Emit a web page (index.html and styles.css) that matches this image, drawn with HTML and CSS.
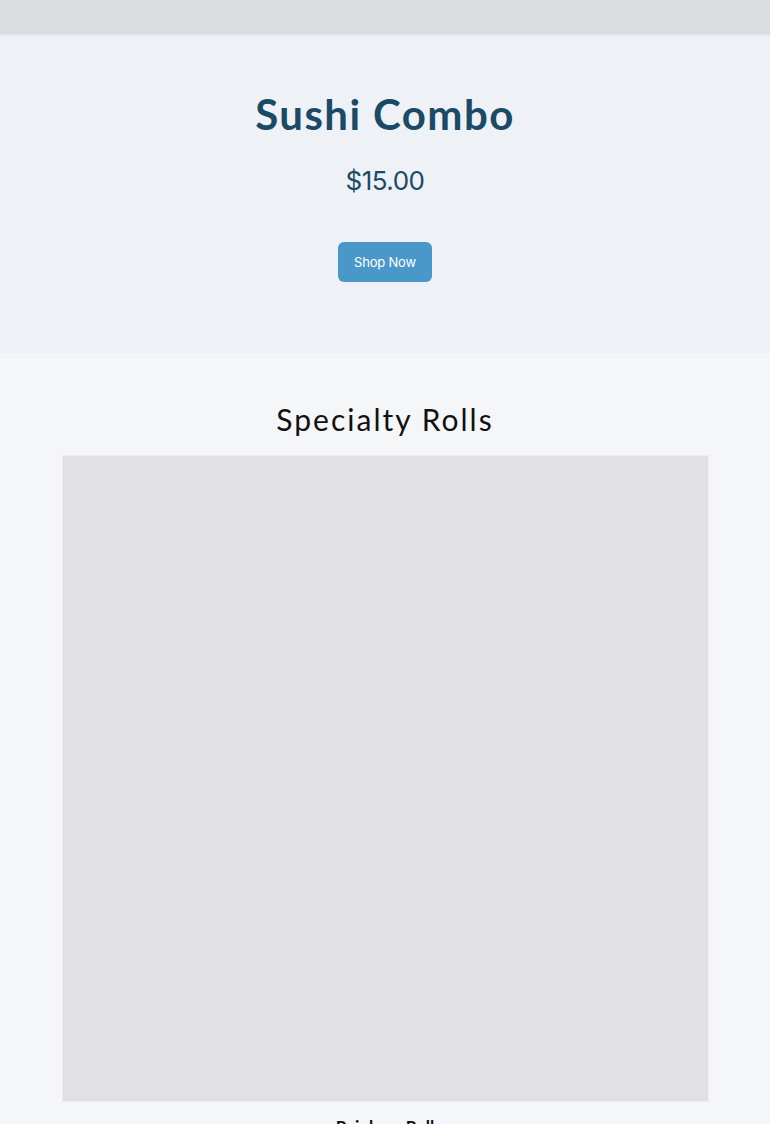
FILE: index.html
```html
<!DOCTYPE html>
<html lang="en">
<head>
	<meta charset="UTF-8">
	<title>Sushi Combo</title>
	<link rel="stylesheet" href="styles.css">
</head>
<body>
	<div class="topbar"></div>

	<div class="hero">
		<h1 class="hero-title">Sushi Combo</h1>
		<p class="hero-price">$15.00</p>
		<a class="btn" href="#">Shop Now</a>
	</div>

	<div class="rolls">
		<h2 class="rolls-title">Specialty Rolls</h2>
		<div class="roll-card">
			<div class="roll-pic"></div>
			<p class="roll-name">Rainbow Roll</p>
		</div>
	</div>
</body>
</html>
```

FILE: styles.css
```css
*{margin:0;padding:0;box-sizing:border-box}
body{background:#f5f6f8;font-family:"Lato","Noto Sans",sans-serif;overflow:hidden}
.topbar{height:36px;background:#d9dde0;border-bottom:2px solid #e2e6e9}
.hero{background:#eef2f6;height:317px;padding-top:53px;text-align:center}
.hero-title{font-family:"Lato",sans-serif;font-weight:700;font-size:42px;line-height:50px;letter-spacing:1.4px;color:#1b4a66}
.hero-price{margin-top:26px;font-family:"Inter",sans-serif;font-size:26px;line-height:32px;color:#1b4a66;letter-spacing:-0.5px}
.btn{display:inline-block;margin-top:45px;width:94px;height:40px;line-height:40px;border-radius:6px;background:#4a98c9;color:#fff;font-family:"Inter",sans-serif;font-size:13px;text-decoration:none;letter-spacing:-0.2px}
.rolls{padding-top:47px;text-align:center}
.rolls-title{font-family:"Lato",sans-serif;font-weight:400;font-size:30px;line-height:38px;letter-spacing:2px;color:#111}
.roll-card{width:645px;margin:18px auto 0}
.roll-pic{height:645px;background:#e1e1e3;box-shadow:0 0 0 1px #eceef1}
.roll-name{margin-top:15px;font-size:17px;line-height:22px;font-weight:700;color:#111}
```
